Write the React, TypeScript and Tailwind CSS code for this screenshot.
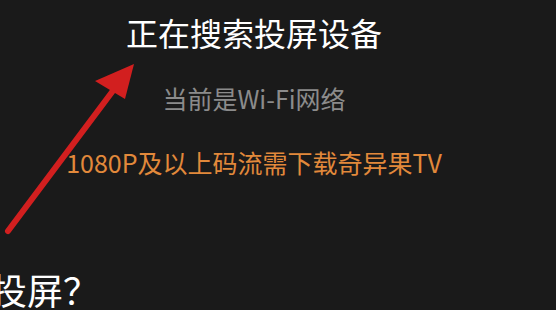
import React from "react";

const cjk = "font-['Noto_Sans_CJK_SC','Noto_Sans',sans-serif]";

function RedArrow() {
  // hand-drawn annotation arrow pointing at the title
  return (
    <svg
      className="absolute left-0 top-0 pointer-events-none"
      width="556"
      height="310"
      viewBox="0 0 556 310"
    >
      <line x1="8" y1="231" x2="124" y2="76" stroke="#d21f1f" strokeWidth="6" strokeLinecap="round" />
      <polygon points="134,64 95,81 125,99" fill="#d21f1f" />
    </svg>
  );
}

export default function App() {
  return (
    <div className={`relative w-[556px] h-[310px] overflow-hidden bg-[#1a1a1a] ${cjk}`}>
      <div className="flex flex-col w-full h-full">
        <div className="flex flex-col items-center w-[508px] pt-[10px]">
          <h1 className="text-white text-[32px] leading-[44px]">正在搜索投屏设备</h1>
          <p className="mt-[28px] text-[#8b8b8b] text-[25px] leading-[32px]">当前是Wi-Fi网络</p>
          <p className="mt-[32px] text-[#e2893b] text-[25px] leading-[32px]">1080P及以上码流需下载奇异果TV</p>
        </div>
        <div className="mt-auto -ml-[9px] h-[42px] text-white text-[36px] leading-[42px] whitespace-nowrap">
          投屏？
        </div>
      </div>
      <RedArrow />
    </div>
  );
}
